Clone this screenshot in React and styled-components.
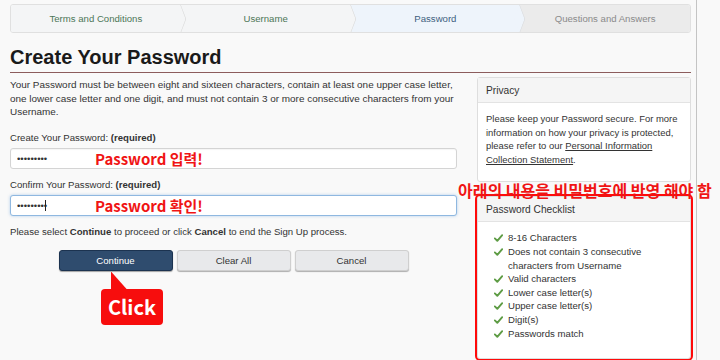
import React from 'react';
import styled, { createGlobalStyle, css } from 'styled-components';

const GlobalStyle = createGlobalStyle`
  html, body {
    margin: 0;
    padding: 0;
    background: #f9f9f9;
  }
  body {
    font-family: 'Liberation Sans', Arial, sans-serif;
    font-size: 9.6px;
    color: #333;
  }
  * {
    box-sizing: border-box;
  }
`;

const Page = styled.div`
  width: 697px;
  min-height: 100vh;
  padding: 4px 5px 0 10px;
  border-right: 1px solid #c4c4c4;
  position: relative;
`;

const Stepper = styled.ol`
  display: flex;
  height: 29px;
  margin: 0;
  padding: 0;
  list-style: none;
  border: 1px solid #e0e0e0;
  border-radius: 3px;
  overflow: hidden;
`;

const stepColors = {
  done: { bg: '#f4f5f6', fg: '#4c7656' },
  active: { bg: '#eef4fb', fg: '#3e5f7e' },
  todo: { bg: '#ebebeb', fg: '#8a8a8a' },
};

const Step = styled.li`
  flex: 1;
  position: relative;
  display: flex;
  align-items: center;
  justify-content: center;
  background: ${({ $state }) => stepColors[$state].bg};
  color: ${({ $state }) => stepColors[$state].fg};

  ${({ $last }) =>
    !$last &&
    css`
      &::after {
        content: '';
        position: absolute;
        right: -10px;
        top: 50%;
        width: 20px;
        height: 20px;
        background: inherit;
        border-top: 1px solid #d6d6d6;
        border-right: 1px solid #d6d6d6;
        transform: translateY(-50%) scaleX(0.38) rotate(45deg);
        z-index: 1;
      }
    `}
`;

const Heading = styled.h1`
  margin: 12px 0 0;
  padding-bottom: 3px;
  font-size: 20px;
  line-height: 24px;
  font-weight: bold;
  color: #1a1a1a;
  border-bottom: 1px solid #8c5c5c;
`;

const Columns = styled.div`
  display: grid;
  grid-template-columns: 447px 214px;
  column-gap: 20px;
  margin-top: 4px;
  align-items: start;
`;

const Intro = styled.p`
  margin: 1px 0 0;
  font-size: 9.95px;
  line-height: 13.6px;
`;

const Label = styled.label`
  display: block;
  line-height: 13.6px;
  margin-top: ${({ $first }) => ($first ? '12px' : '9px')};
`;

const FieldWrap = styled.div`
  position: relative;
  margin-top: 3.5px;
`;

const Field = styled.input`
  display: block;
  width: 100%;
  height: 21px;
  padding: 0 6px;
  font-family: 'Liberation Sans', Arial, sans-serif;
  font-size: 9.6px;
  color: #333;
  background: #fff;
  border-radius: 3px;
  outline: none;
  border: 1px solid ${({ $focused }) => ($focused ? '#8fb8e0' : '#d4d4d4')};
  box-shadow: ${({ $focused }) =>
    $focused ? '0 0 3px rgba(102, 160, 220, 0.5)' : 'inset 0 1px 1px rgba(0,0,0,0.04)'};
`;

const Caret = styled.span`
  position: absolute;
  left: 35px;
  top: 5px;
  width: 1px;
  height: 11px;
  background: #222;
`;

const Note = styled.span`
  position: absolute;
  left: 85px;
  top: 50%;
  transform: translateY(-50%);
  font-family: 'Noto Sans CJK KR', sans-serif;
  font-weight: bold;
  font-size: 15px;
  line-height: 15px;
  color: #f01414;
  white-space: nowrap;
  pointer-events: none;
`;

const Hint = styled.p`
  margin: 9px 0 0;
  line-height: 13.6px;
`;

const ButtonRow = styled.div`
  position: relative;
  display: flex;
  justify-content: center;
  gap: 4px;
  margin-top: 11px;
`;

const Button = styled.button`
  width: 114px;
  height: 21px;
  padding: 0;
  font-family: 'Liberation Sans', Arial, sans-serif;
  font-size: 9.6px;
  border-radius: 3px;
  cursor: pointer;
  ${({ $primary }) =>
    $primary
      ? css`
          background: #2f4c6e;
          color: #fff;
          border: 1px solid #1c3350;
          box-shadow: 0 1px 1px rgba(0, 0, 0, 0.35);
        `
      : css`
          background: #e8e9eb;
          color: #333;
          border: 1px solid #cfcfcf;
          box-shadow: 0 1px 1px rgba(0, 0, 0, 0.3);
        `}
`;

const Callout = styled.div`
  position: absolute;
  left: 91px;
  top: 39px;
  width: 62px;
  height: 36px;
  border-radius: 4px;
  background: #f70d0d;
  color: #fff;
  display: flex;
  align-items: center;
  justify-content: center;
  font-family: 'Noto Sans CJK KR', sans-serif;
  font-weight: bold;
  font-size: 20px;
  padding-bottom: 1px;

  &::before {
    content: '';
    position: absolute;
    left: 10px;
    top: -17px;
    width: 16px;
    height: 18px;
    background: #f70d0d;
    clip-path: polygon(0 0, 100% 100%, 0 100%);
  }
`;

const Side = styled.aside`
  display: flex;
  flex-direction: column;
`;

const Panel = styled.section`
  position: relative;
  background: #fff;
  border: 1px solid #dedede;
  border-radius: 3px;
  margin-top: ${({ $gap }) => $gap || 0}px;
  ${({ $marked }) =>
    $marked &&
    css`
      outline: 2px solid #ff0a0a;
    `}
`;

const PanelHead = styled.header`
  height: 25px;
  display: flex;
  align-items: center;
  padding: 0 8px;
  background: #f5f5f5;
  border-bottom: 1px solid #e3e3e3;
  font-size: 10.2px;
  color: #333;
`;

const PanelBody = styled.div`
  padding: 9px 8px ${({ $tall }) => ($tall ? '18px' : '15px')};
  font-size: ${({ $small }) => ($small ? '9.45px' : '9.6px')};
  line-height: 13.6px;
`;

const Link = styled.a`
  color: #333;
  text-decoration: underline;
`;

const Banner = styled.span`
  position: absolute;
  left: -20px;
  top: -14px;
  font-family: 'Noto Sans CJK KR', sans-serif;
  font-weight: bold;
  font-size: 16px;
  line-height: 15px;
  color: #f01414;
  white-space: nowrap;
  z-index: 2;
`;

const CheckList = styled.ul`
  margin: 0;
  padding: 0 0 0 8px;
  list-style: none;
`;

const CheckItem = styled.li`
  display: flex;
  align-items: flex-start;
  gap: 5px;
  line-height: 13.6px;

  svg {
    flex: none;
    margin-top: 3px;
  }
`;

const CheckMark = () => (
  <svg width="9" height="8" viewBox="0 0 9 8">
    <path
      d="M0.8 4.4 L3.3 6.8 L8.2 1.2"
      fill="none"
      stroke="#5e9c45"
      strokeWidth="1.9"
      strokeLinecap="round"
      strokeLinejoin="round"
    />
  </svg>
);

const steps = [
  { label: 'Terms and Conditions', state: 'done' },
  { label: 'Username', state: 'done' },
  { label: 'Password', state: 'active' },
  { label: 'Questions and Answers', state: 'todo' },
];

const checks = [
  '8-16 Characters',
  'Does not contain 3 consecutive characters from Username',
  'Valid characters',
  'Lower case letter(s)',
  'Upper case letter(s)',
  'Digit(s)',
  'Passwords match',
];

const App = () => {
  return (
    <>
      <GlobalStyle />
      <Page>
        <Stepper>
          {steps.map((s, i) => (
            <Step key={s.label} $state={s.state} $last={i === steps.length - 1}>
              {s.label}
            </Step>
          ))}
        </Stepper>

        <Heading>Create Your Password</Heading>

        <Columns>
          <div>
            <Intro>
              Your Password must be between eight and sixteen characters, contain at least one upper
              case letter, one lower case letter and one digit, and must not contain 3 or more
              consecutive characters from your Username.
            </Intro>

            <Label $first htmlFor="pw1">
              Create Your Password: <b>(required)</b>
            </Label>
            <FieldWrap>
              <Field id="pw1" type="password" readOnly value="Abcdefg12" />
              <Note>Password 입력!</Note>
            </FieldWrap>

            <Label htmlFor="pw2">
              Confirm Your Password: <b>(required)</b>
            </Label>
            <FieldWrap>
              <Field id="pw2" type="password" readOnly value="Abcdefg12" $focused />
              <Caret />
              <Note>Password 확인!</Note>
            </FieldWrap>

            <Hint>
              Please select <b>Continue</b> to proceed or click <b>Cancel</b> to end the Sign Up
              process.
            </Hint>

            <ButtonRow>
              <Button $primary>Continue</Button>
              <Button>Clear All</Button>
              <Button>Cancel</Button>
              <Callout>Click</Callout>
            </ButtonRow>
          </div>

          <Side>
            <Panel>
              <PanelHead>Privacy</PanelHead>
              <PanelBody $small>
                Please keep your Password secure. For more information on how your privacy is
                protected, please refer to our{' '}
                <Link href="#">Personal Information Collection Statement</Link>.
              </PanelBody>
            </Panel>

            <Panel $gap={14} $marked>
              <Banner>아래의 내용을 비밀번호에 반영 해야 함</Banner>
              <PanelHead>Password Checklist</PanelHead>
              <PanelBody $tall>
                <CheckList>
                  {checks.map((c) => (
                    <CheckItem key={c}>
                      <CheckMark />
                      <span>{c}</span>
                    </CheckItem>
                  ))}
                </CheckList>
              </PanelBody>
            </Panel>
          </Side>
        </Columns>
      </Page>
    </>
  );
};

export default App;
